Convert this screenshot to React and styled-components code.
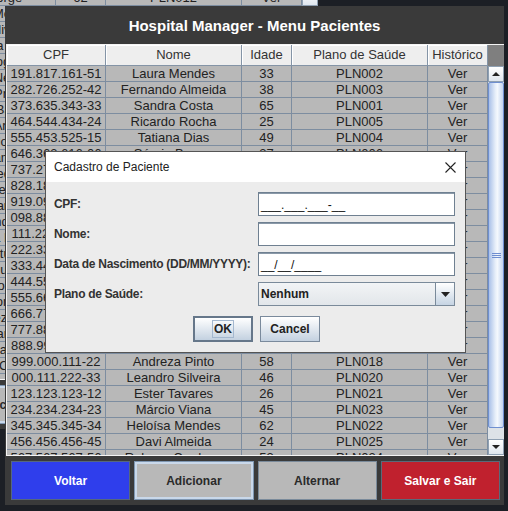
import styled, { createGlobalStyle } from "styled-components";

const GlobalStyle = createGlobalStyle`
  html, body { margin: 0; padding: 0; background: #17191e; }
  body { font-family: "Liberation Sans", Arial, sans-serif; }
`;

const COLS = "99px 136px 50px 136px 60px";
const HEADERS = ["CPF", "Nome", "Idade", "Plano de Saúde", "Histórico"];

const pacientes = [
  ["191.817.161-51", "Laura Mendes", 33, "PLN002"],
  ["282.726.252-42", "Fernando Almeida", 38, "PLN003"],
  ["373.635.343-33", "Sandra Costa", 65, "PLN001"],
  ["464.544.434-24", "Ricardo Rocha", 25, "PLN005"],
  ["555.453.525-15", "Tatiana Dias", 49, "PLN004"],
  ["646.363.616-06", "Sérgio Barros", 37, "PLN006"],
  ["737.272.707-97", "Juliana Freitas", 29, "PLN007"],
  ["828.181.898-88", "Marcos Pereira", 51, "PLN008"],
  ["919.090.989-79", "Patrícia Lima", 44, "PLN009"],
  ["098.887.776-65", "Gustavo Ramos", 36, "PLN010"],
  ["111.222.333-44", "Camila Nunes", 27, "PLN011"],
  ["222.333.444-55", "Rafael Souza", 53, "PLN013"],
  ["333.444.555-66", "Beatriz Lopes", 31, "PLN014"],
  ["444.555.666-77", "Eduardo Martins", 47, "PLN015"],
  ["555.666.777-88", "Larissa Gomes", 22, "PLN016"],
  ["666.777.888-99", "Thiago Carvalho", 40, "PLN017"],
  ["777.888.999-00", "Vanessa Ribeiro", 35, "PLN019"],
  ["888.999.000-11", "Bruno Teixeira", 59, "PLN012"],
  ["999.000.111-22", "Andreza Pinto", 58, "PLN018"],
  ["000.111.222-33", "Leandro Silveira", 46, "PLN020"],
  ["123.123.123-12", "Ester Tavares", 26, "PLN021"],
  ["234.234.234-23", "Márcio Viana", 45, "PLN023"],
  ["345.345.345-34", "Heloísa Mendes", 62, "PLN022"],
  ["456.456.456-45", "Davi Almeida", 24, "PLN025"],
  ["567.567.567-56", "Rebeca Cardoso", 53, "PLN024"],
];

// the copy of the window that sits behind, only its edges show
const pacientesFundo = [
  ["717.171.171-71", "Paulo Jorge", 62, "PLN012"],
  ["818.181.818-81", "Cristiane Moreira", 41, "PLN013"],
  ["929.292.929-92", "Renata Oliveira", 30, "PLN014"],
  ["131.313.131-31", "Alessandra Pires", 55, "PLN015"],
  ["242.424.242-42", "Fabiano Nogueira", 39, "PLN016"],
  ["353.535.353-53", "Rogério Neves", 48, "PLN017"],
  ["464.646.464-64", "Simone Prado", 34, "PLN018"],
  ["575.757.575-75", "Henrique Bastos", 61, "PLN019"],
  ["686.868.686-86", "Mariana Araújo", 28, "PLN020"],
  ["797.979.797-97", "Cláudio Moraes", 52, "PLN021"],
  ["808.080.808-08", "Letícia Campos", 23, "PLN022"],
  ["919.191.919-19", "Roberto Medeiros", 66, "PLN023"],
  ["020.202.020-20", "Aline Vieira", 37, "PLN024"],
  ["121.212.121-21", "Wagner Cardoso", 43, "PLN025"],
  ["232.323.232-32", "Débora Andrade", 32, "PLN026"],
  ["343.434.343-43", "Fernanda Reis", 50, "PLN027"],
  ["454.545.454-54", "Otávio Antunes", 45, "PLN028"],
  ["565.656.565-65", "Priscila Duarte", 29, "PLN029"],
  ["676.767.676-76", "Natália Fontes", 38, "PLN030"],
  ["787.878.787-87", "Gabriel Monteiro", 27, "PLN031"],
  ["898.989.898-98", "Isabela Rezende", 33, "PLN032"],
  ["909.090.909-09", "Rodrigo Barbosa", 57, "PLN033"],
  ["010.101.010-01", "Luciana Macedo", 41, "PLN034"],
  ["111.000.111-00", "Sebastião Cunha", 70, "PLN035"],
  ["212.121.212-12", "Jéssica Albuquerque", 26, "PLN036"],
];

const Desktop = styled.div`
  position: relative;
  width: 508px;
  height: 511px;
  overflow: hidden;
  background: #1c1f25;
`;

const Frame = styled.div`
  position: absolute;
  left: ${(p) => p.$x}px;
  top: ${(p) => p.$y}px;
  width: 499px;
  height: 499px;
  background: #3a3a3a;
  display: flex;
  flex-direction: column;
`;

const TitleBar = styled.div`
  height: 38px;
  flex: none;
  display: flex;
  align-items: center;
  justify-content: center;
  color: #fff;
  font: bold 15px "Liberation Sans", Arial, sans-serif;
`;

const ScrollPane = styled.div`
  margin-left: 1px;
  border: 1px solid #f4f4f4;
  border-right: none;
  display: grid;
  grid-template-columns: 481px 16px;
  grid-template-rows: 21px 389px;
  background: #b8b8b8;
`;

const HeaderRow = styled.div`
  display: grid;
  grid-template-columns: ${COLS};
`;

const HeadCell = styled.div`
  height: 21px;
  box-sizing: border-box;
  background: #eeeeee;
  border-right: 1px solid #8494a6;
  border-bottom: 1px solid #8494a6;
  box-shadow: inset 1px 1px 0 #ffffff;
  font-size: 13px;
  line-height: 20px;
  color: #333;
  text-align: center;
  white-space: nowrap;
`;

const Corner = styled.div`
  background: #7f7f7f;
`;

const Viewport = styled.div`
  overflow: hidden;
  background: #b8b8b8;
`;

const Row = styled.div`
  display: grid;
  grid-template-columns: ${COLS};
`;

const Cell = styled.div`
  height: 16px;
  box-sizing: border-box;
  border-right: 1px solid #7d8da0;
  border-bottom: 1px solid #7d8da0;
  font-size: 13px;
  line-height: 15px;
  color: #222;
  text-align: center;
  white-space: nowrap;
  overflow: hidden;
`;

const ScrollBar = styled.div`
  display: flex;
  flex-direction: column;
  background: #dde2e7;
`;

const ArrowButton = styled.div`
  height: 16px;
  flex: none;
  box-sizing: border-box;
  border: 1px solid #8fa0b2;
  background: linear-gradient(#ffffff, #dfe6ee);
  display: flex;
  align-items: center;
  justify-content: center;
`;

const Track = styled.div`
  flex: 1;
  display: flex;
  flex-direction: column;
`;

const Thumb = styled.div`
  height: ${(p) => p.$size}px;
  margin-top: ${(p) => p.$offset}px;
  box-sizing: border-box;
  border: 1px solid #6f8fd0;
  border-radius: 2px;
  background: linear-gradient(to right, #a9c0e8, #e6eef9 45%, #f4f8fd 60%, #c2d3ee);
  display: flex;
  flex-direction: column;
  align-items: center;
  justify-content: center;
  gap: 1px;
`;

const Grip = styled.div`
  width: 9px;
  height: 1px;
  background: #6f8ed0;
`;

const ButtonBar = styled.div`
  flex: 1;
  display: grid;
  grid-template-columns: repeat(4, 1fr);
  gap: 4px;
  padding: 5px 4px 5px 6px;
`;

const tones = {
  blue: { bg: "#2f3eec", fg: "#fff", border: "#56677e" },
  grey: { bg: "#b8b8b8", fg: "#2a2a2a", border: "#7a8a9a" },
  focus: { bg: "#b8b8b8", fg: "#2a2a2a", border: "#7f97b2" },
  red: { bg: "#c0212e", fg: "#fff", border: "#5a6a7a" },
};

const ActionButton = styled.button`
  margin: 0;
  padding: 0;
  border: 1px solid ${(p) => tones[p.$tone].border};
  box-shadow: ${(p) => (p.$tone === "focus" ? "inset 0 0 0 2px #c9d8ea" : "none")};
  background: ${(p) => tones[p.$tone].bg};
  color: ${(p) => tones[p.$tone].fg};
  font: bold 12px "Liberation Sans", Arial, sans-serif;
`;

const Dialog = styled.div`
  position: absolute;
  left: 45px;
  top: 151px;
  width: 421px;
  height: 202px;
  box-sizing: border-box;
  border: 1px solid #555;
  background: #ececec;
  display: flex;
  flex-direction: column;
`;

const DialogTitle = styled.div`
  height: 30px;
  flex: none;
  background: #fff;
  display: flex;
  align-items: center;
  justify-content: space-between;
  padding: 0 9px 0 8px;
  font-size: 12px;
  color: #222;
`;

const Form = styled.div`
  display: grid;
  grid-template-columns: 204px 197px;
  grid-auto-rows: 24px;
  row-gap: 6px;
  padding: 10px 0 0 8px;
`;

const Label = styled.div`
  display: flex;
  align-items: center;
  font: bold 12px "Liberation Sans", Arial, sans-serif;
  letter-spacing: -0.3px;
  color: #333;
`;

const Field = styled.div`
  box-sizing: border-box;
  border: 1px solid #6f8091;
  box-shadow: inset 0 1px 0 #8a99a8;
  background: #fff;
  padding: 4px 0 0 2px;
  font-size: 12px;
  line-height: 16px;
  color: #111;
  white-space: pre;
`;

const Combo = styled.div`
  box-sizing: border-box;
  border: 1px solid #7a8a9a;
  background: linear-gradient(#f2f4f6, #e2e6ea);
  display: flex;
  align-items: stretch;
`;

const ComboText = styled.div`
  flex: 1;
  display: flex;
  align-items: center;
  padding-left: 2px;
  font: bold 12px "Liberation Sans", Arial, sans-serif;
  color: #222;
`;

const ComboArrow = styled.div`
  width: 18px;
  border-left: 1px solid #7a8a9a;
  background: linear-gradient(#ffffff, #c6d4e3);
  display: flex;
  align-items: center;
  justify-content: center;
`;

const DialogButtons = styled.div`
  display: flex;
  justify-content: center;
  gap: 7px;
  padding: 10px 0 0 2px;
`;

const DialogButton = styled.button`
  width: 60px;
  height: 26px;
  margin: 0;
  padding: 0;
  box-sizing: border-box;
  border: ${(p) => (p.$default ? "2px solid #66778a" : "1px solid #7a8a9c")};
  background: linear-gradient(#ffffff, #c3d1e0);
  display: flex;
  align-items: center;
  justify-content: center;
  font: bold 12px "Liberation Sans", Arial, sans-serif;
  color: #222;
`;

const FocusRing = styled.span`
  border: 1px solid #a4b8cf;
  padding: 2px 1px;
  line-height: 12px;
`;

const Arrow = ({ up, w = 8, h = 4 }) => (
  <svg width={w} height={h} viewBox={`0 0 ${w} ${h}`}>
    <polygon
      points={up ? `0,${h} ${w / 2},0 ${w},${h}` : `0,0 ${w},0 ${w / 2},${h}`}
      fill="#222"
    />
  </svg>
);

function Janela({ x, y, rows, children }) {
  return (
    <Frame $x={x} $y={y}>
      <TitleBar>Hospital Manager - Menu Pacientes</TitleBar>
      <ScrollPane>
        <HeaderRow>
          {HEADERS.map((h) => (
            <HeadCell key={h}>{h}</HeadCell>
          ))}
        </HeaderRow>
        <Corner />
        <Viewport>
          {rows.map((r) => (
            <Row key={r[0]}>
              <Cell>{r[0]}</Cell>
              <Cell>{r[1]}</Cell>
              <Cell>{r[2]}</Cell>
              <Cell>{r[3]}</Cell>
              <Cell>Ver</Cell>
            </Row>
          ))}
        </Viewport>
        <ScrollBar>
          <ArrowButton>
            <Arrow up />
          </ArrowButton>
          <Track>
            <Thumb $size={346} $offset={0}>
              <Grip />
              <Grip />
              <Grip />
            </Thumb>
          </Track>
          <ArrowButton>
            <Arrow />
          </ArrowButton>
        </ScrollBar>
      </ScrollPane>
      <ButtonBar>
        <ActionButton $tone="blue">Voltar</ActionButton>
        <ActionButton $tone="focus">Adicionar</ActionButton>
        <ActionButton $tone="grey">Alternar</ActionButton>
        <ActionButton $tone="red">Salvar e Sair</ActionButton>
      </ButtonBar>
      {children}
    </Frame>
  );
}

export default function App() {
  return (
    <>
      <GlobalStyle />
      <Desktop>
        <Janela x={-181} y={-70} rows={pacientesFundo} />
        <Janela x={5} y={6} rows={pacientes} />
        <Dialog>
          <DialogTitle>
            <span>Cadastro de Paciente</span>
            <svg width="11" height="11" viewBox="0 0 11 11">
              <path d="M0.5 0.5 L10.5 10.5 M10.5 0.5 L0.5 10.5" stroke="#222" strokeWidth="1.1" />
            </svg>
          </DialogTitle>
          <Form>
            <Label>CPF:</Label>
            <Field>___.___.___-__</Field>
            <Label>Nome:</Label>
            <Field />
            <Label>Data de Nascimento (DD/MM/YYYY):</Label>
            <Field>__/__/____</Field>
            <Label>Plano de Saúde:</Label>
            <Combo>
              <ComboText>Nenhum</ComboText>
              <ComboArrow>
                <Arrow w={9} h={5} />
              </ComboArrow>
            </Combo>
          </Form>
          <DialogButtons>
            <DialogButton $default>
              <FocusRing>OK</FocusRing>
            </DialogButton>
            <DialogButton>Cancel</DialogButton>
          </DialogButtons>
        </Dialog>
      </Desktop>
    </>
  );
}
